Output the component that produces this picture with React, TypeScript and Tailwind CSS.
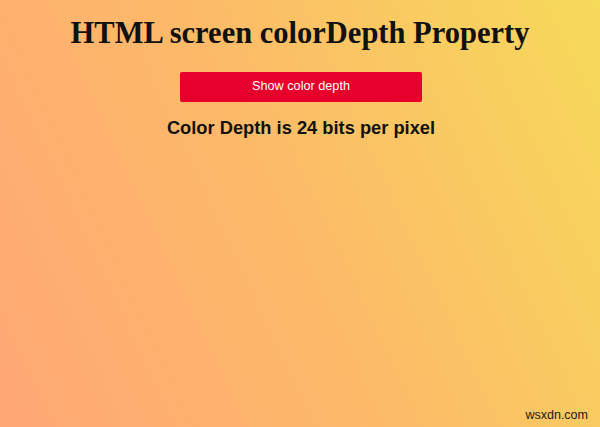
export default function App() {
  return (
    <div className="relative flex h-[427px] w-[600px] flex-col items-center overflow-hidden bg-[linear-gradient(65deg,#ffa775_0%,#fcbb68_50%,#f6da5a_100%)] text-black">
      <h1 className="mt-[15px] font-['Liberation_Serif',serif] text-[30.5px] font-bold leading-[36px] text-[#111]">
        HTML screen colorDepth Property
      </h1>
      <button
        type="button"
        className="ml-[2px] mt-[21px] h-[30px] w-[242px] rounded-[2px] bg-[#e6002b] font-['Liberation_Sans',Arial,sans-serif] text-[12.7px] text-white"
      >
        Show color depth
      </button>
      <p className="ml-[2px] mt-[15px] font-['Liberation_Sans',Arial,sans-serif] text-[18.3px] font-bold leading-[22px] text-[#111]">
        Color Depth is 24 bits per pixel
      </p>
      <span className="absolute bottom-[2px] right-[12px] font-['Liberation_Sans',Arial,sans-serif] text-[12.5px] text-[#1a1a1a]">
        wsxdn.com
      </span>
    </div>
  );
}
